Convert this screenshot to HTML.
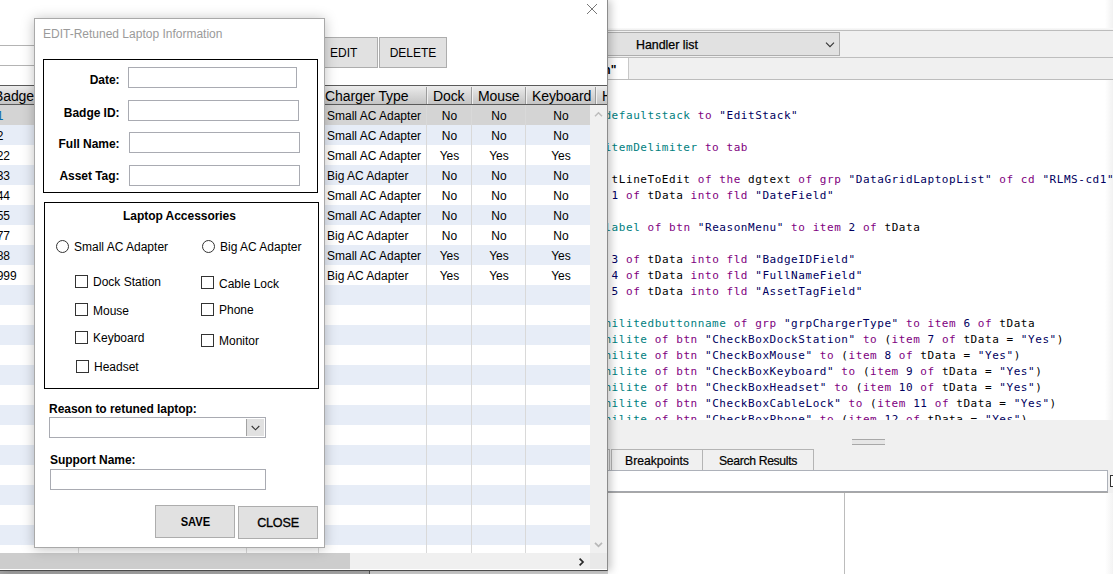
<!DOCTYPE html>
<html><head><meta charset="utf-8"><title>EDIT-Retuned Laptop Information</title>
<style>
*{box-sizing:border-box;margin:0;padding:0}
html,body{width:1113px;height:574px;overflow:hidden;background:#fff}
body{position:relative;font-family:"Liberation Sans",sans-serif;font-size:12px;color:#000}
.abs{position:absolute}
/* ---------- script editor (right) ---------- */
#ed{position:absolute;left:560px;top:0;width:553px;height:574px;background:#fff;overflow:hidden}
#ed .bar1{position:absolute;left:0;top:28px;width:553px;height:30px;background:linear-gradient(#fafafa 0,#f0f0f0 2px,#bcbcbc 2px,#bcbcbc 3px,#f0f0f0 3px);border-bottom:1px solid #bebebe}
#ed .combo{position:absolute;left:0;top:32px;width:280px;height:24px;background:#e1e1e1;border:1px solid #adadad}
#ed .combo span{position:absolute;left:75px;top:5px;font-size:12.4px;-webkit-text-stroke:0.25px #000;white-space:nowrap}
#ed .bar2{position:absolute;left:0;top:58px;width:553px;height:22px;background:#f0f0f0;border-bottom:1px solid #bdbdbd}
#ed .tab0{position:absolute;left:0;top:58px;width:69px;height:21px;background:#fff;border-right:1px solid #c8c8c8}
#ed .tab0 span{position:absolute;left:36px;top:5px;font-weight:bold;font-size:12px;white-space:nowrap}
#code{position:absolute;left:0;top:80px;width:553px;height:340px;overflow:hidden;background:#fff}
#code pre{position:absolute;left:-13px;top:28px;font-family:"DejaVu Sans Mono",monospace;font-size:11px;letter-spacing:0.555px;line-height:16px;color:#000;white-space:pre}
.k{color:#800080}.p{color:#008080}.s{color:#000060}.c{color:#0000a0}
#ed .low{position:absolute;left:0;top:420px;width:553px;height:154px;background:#f0f0f0}
#ed .grip{position:absolute;left:292px;top:439px;width:33px;height:6px;border-top:1px solid #a8a8a8;border-bottom:1px solid #a8a8a8;background:#e6e6e6}
.btab{position:absolute;top:449px;height:21px;padding-top:1px;background:#f0f0f0;border:1px solid #b4b4b4;border-bottom:none;font-size:12.2px;-webkit-text-stroke:0.2px #000;white-space:nowrap;text-align:center;line-height:20px}
#ed .fld{position:absolute;left:0;top:470px;width:548px;height:22px;background:#fff;border:1px solid #adb1b9;border-bottom:1px solid #a4a7ad}
#ed .pane{position:absolute;left:0;top:492px;width:548px;height:82px;background:#fff;border-top:1px solid #a8a8a8}
#ed .rstrip{position:absolute;left:545px;top:493px;width:8px;height:81px;background:linear-gradient(90deg,#fff,#f3f3f3)}
#ed .rs2{position:absolute;left:545px;width:8px;background:linear-gradient(90deg,rgba(0,0,0,0),rgba(0,0,0,.055))}
#ed .vline{position:absolute;left:284px;top:493px;width:1px;height:82px;background:#bcbcbc}
#ed .cbx{position:absolute;left:550px;top:475px;width:12px;height:12px;border:1px solid #333;background:#fff}
/* ---------- main window ---------- */
#mw{position:absolute;left:0;top:0;width:608px;height:571px;background:#fff;border-right:1px solid #8c8c8c;border-bottom:1px solid #4a4a4a;box-shadow:3px 0 8px rgba(0,0,0,.22);overflow:hidden}
#under{position:absolute;left:0;top:570px;width:608px;height:4px;background:linear-gradient(90deg,#a2a2a2 0,#ababab 369px,#555 369px,#555 370px,#d0d0d0 370px)}
.wbtn{position:absolute;background:#e1e1e1;border:1px solid #adadad;font-size:12px;padding-top:1px;text-align:center;white-space:nowrap}
#hdr{position:absolute;left:0;top:85px;width:607px;height:20px;border-top:1px solid #5a5a5a;border-bottom:1px solid #5a5a5a;background:linear-gradient(#ececec,#d9d9d9 45%,#c4c4c4);overflow:hidden;font-size:14px}
#hdr span{position:absolute;top:2px;white-space:nowrap;letter-spacing:-0.1px}
#hdr i{position:absolute;top:1px;height:17px;background:#9c9c9c;border-right:1px solid #f0f0f0;width:2px}
#rows{position:absolute;left:0;top:105px;width:590px;height:448px;background:repeating-linear-gradient(#fff 0,#fff 20px,#e7edf7 20px,#e7edf7 40px);overflow:hidden}
#rows .sel{position:absolute;left:0;top:0;width:590px;height:20px;background:#d4d4d4}
#rows .cl{position:absolute;top:0;width:1px;height:448px;background:#d9d9d9}
#rows span{position:absolute;white-space:nowrap;font-size:12px;line-height:20px;letter-spacing:0;margin-top:1px}
.cc{text-align:center}
#vs{position:absolute;left:590px;top:105px;width:17px;height:448px;background:#f0f0f0}
#hs{position:absolute;left:0;top:553px;width:590px;height:17px;background:#f0f0f0;border-bottom:1px solid #fff}
#hs .th{position:absolute;left:0;top:0;width:350px;height:16px;background:#cdcdcd}
#cor{position:absolute;left:590px;top:553px;width:17px;height:17px;background:#e9e9e9;border-bottom:1px solid #fff}
/* ---------- dialog ---------- */
#dlg{position:absolute;left:34px;top:18px;width:291px;height:530px;background:#fff;border:1px solid #a9a9a9;box-shadow:0 1px 12px rgba(0,0,0,.25)}
#dlg .ttl{position:absolute;left:8px;top:8px;font-size:12px;color:#9a9a9a;white-space:nowrap;letter-spacing:0}
.grp{position:absolute;border:1px solid #000;background:#fff}
.lb{position:absolute;font-weight:bold;font-size:12px;white-space:nowrap;letter-spacing:-0.04px}
.in{position:absolute;height:21px;background:#fff;border:1px solid #a9abb2}
.cb{position:absolute;width:13px;height:13px;border:1px solid #333;background:#fff}
.rb{position:absolute;width:13px;height:13px;border:1px solid #333;border-radius:50%;background:#fff}
.tx{position:absolute;font-size:12px;white-space:nowrap;letter-spacing:0}
.dbtn{position:absolute;background:#e1e1e1;border:1px solid #adadad;text-align:center;white-space:nowrap;font-size:12.6px}
</style></head>
<body>

<!-- script editor -->
<div id="ed">
  <div class="bar1"></div>
  <div class="combo"><span>Handler list</span>
    <svg class="abs" style="left:263px;top:8px" width="12" height="8" viewBox="0 0 12 8"><path d="M2 1.6 L6 5.6 L10 1.6" fill="none" stroke="#333" stroke-width="1.1"/></svg>
  </div>
  <div class="bar2"></div>
  <div class="tab0"><span>on"</span></div>
  <div id="code"><pre>set the <span class="p">defaultstack</span> <span class="k">to</span> <span class="s">"EditStack"</span>

set the <span class="p">itemDelimiter</span> <span class="k">to</span> <span class="k">tab</span>

put line tLineToEdit <span class="k">of</span> <span class="k">the</span> dgtext <span class="k">of</span> <span class="k">grp</span> <span class="s">"DataGridLaptopList"</span> <span class="k">of</span> <span class="k">cd</span> <span class="s">"RLMS-cd1"</span>
put item <span class="s">1</span> <span class="k">of</span> tData <span class="k">into</span> <span class="k">fld</span> <span class="s">"DateField"</span>

set the <span class="p">label</span> <span class="k">of</span> <span class="k">btn</span> <span class="s">"ReasonMenu"</span> <span class="k">to</span> <span class="k">item</span> <span class="s">2</span> <span class="k">of</span> tData

put item <span class="s">3</span> <span class="k">of</span> tData <span class="k">into</span> <span class="k">fld</span> <span class="s">"BadgeIDField"</span>
put item <span class="s">4</span> <span class="k">of</span> tData <span class="k">into</span> <span class="k">fld</span> <span class="s">"FullNameField"</span>
put item <span class="s">5</span> <span class="k">of</span> tData <span class="k">into</span> <span class="k">fld</span> <span class="s">"AssetTagField"</span>

set the <span class="p">hilitedbuttonname</span> <span class="k">of</span> <span class="k">grp</span> <span class="s">"grpChargerType"</span> <span class="k">to</span> <span class="k">item</span> <span class="s">6</span> <span class="k">of</span> tData
set the <span class="p">hilite</span> <span class="k">of</span> <span class="k">btn</span> <span class="s">"CheckBoxDockStation"</span> <span class="k">to</span> (<span class="k">item</span> <span class="s">7</span> <span class="k">of</span> tData = <span class="s">"Yes"</span>)
set the <span class="p">hilite</span> <span class="k">of</span> <span class="k">btn</span> <span class="s">"CheckBoxMouse"</span> <span class="k">to</span> (<span class="k">item</span> <span class="s">8</span> <span class="k">of</span> tData = <span class="s">"Yes"</span>)
set the <span class="p">hilite</span> <span class="k">of</span> <span class="k">btn</span> <span class="s">"CheckBoxKeyboard"</span> <span class="k">to</span> (<span class="k">item</span> <span class="s">9</span> <span class="k">of</span> tData = <span class="s">"Yes"</span>)
set the <span class="p">hilite</span> <span class="k">of</span> <span class="k">btn</span> <span class="s">"CheckBoxHeadset"</span> <span class="k">to</span> (<span class="k">item</span> <span class="s">10</span> <span class="k">of</span> tData = <span class="s">"Yes"</span>)
set the <span class="p">hilite</span> <span class="k">of</span> <span class="k">btn</span> <span class="s">"CheckBoxCableLock"</span> <span class="k">to</span> (<span class="k">item</span> <span class="s">11</span> <span class="k">of</span> tData = <span class="s">"Yes"</span>)
set the <span class="p">hilite</span> <span class="k">of</span> <span class="k">btn</span> <span class="s">"CheckBoxPhone"</span> <span class="k">to</span> (<span class="k">item</span> <span class="s">12</span> <span class="k">of</span> tData = <span class="s">"Yes"</span>)
set the <span class="p">hilite</span> <span class="k">of</span> <span class="k">btn</span> <span class="s">"CheckBoxMonitor"</span> <span class="k">to</span> (<span class="k">item</span> <span class="s">13</span> <span class="k">of</span> tData = <span class="s">"Yes"</span>)</pre></div>
  <div class="low"></div>
  <div class="grip"></div>
  <div class="btab" style="left:0;width:50px">Errors</div>
  <div class="btab" style="left:51px;width:92px;letter-spacing:-0.05px">Breakpoints</div>
  <div class="btab" style="left:142px;width:112px;letter-spacing:-0.33px">Search Results</div>
  <div class="pane"></div><div class="rstrip"></div><div class="rs2" style="top:0;height:28px"></div><div class="rs2" style="top:80px;height:340px"></div>
  <div class="fld"></div>
  <div class="vline"></div>
  <div class="cbx"></div>
</div>

<!-- main window -->
<div id="under"></div>
<div id="mw">
  <svg class="abs" style="left:586px;top:3px" width="12" height="12" viewBox="0 0 12 12"><path d="M1 1 L11 11 M11 1 L1 11" stroke="#777" stroke-width="1" fill="none"/></svg>
  <div class="abs" style="left:-5px;top:45px;width:60px;height:21px;border:1px solid #b4b4b4;background:#fff"></div>
  <div class="wbtn" style="left:300px;top:37px;width:78px;height:31px;line-height:29px;text-align:left;padding-left:29px">EDIT</div>
  <div class="wbtn" style="left:379px;top:37px;width:68px;height:31px;line-height:29px">DELETE</div>
  <div id="hdr">
    <span style="left:-6px">Badge ID</span>
    <span style="left:325px">Charger Type</span><i style="left:426px"></i>
    <span style="left:433px">Dock</span><i style="left:471px"></i>
    <span style="left:478px">Mouse</span><i style="left:525px"></i>
    <span style="left:532px">Keyboard</span><i style="left:595px"></i>
    <span style="left:602px">Headset</span>
  </div>
  <div id="rows">
    <div class="sel"></div>
    <div class="cl" style="left:78px"></div><div class="cl" style="left:246px"></div><div class="cl" style="left:318px"></div>
    <div class="cl" style="left:426px"></div><div class="cl" style="left:471px"></div><div class="cl" style="left:525px"></div>
    <span style="left:-9px;top:0;color:#0a6aa8">11</span>
    <span style="left:-10px;top:20px">22</span>
    <span style="left:-10px;top:40px">222</span>
    <span style="left:-10px;top:60px">333</span>
    <span style="left:-10px;top:80px">444</span>
    <span style="left:-10px;top:100px">555</span>
    <span style="left:-10px;top:120px">777</span>
    <span style="left:-10px;top:140px">888</span>
    <span style="left:-10px;top:160px">9999</span>
    <span style="left:327px;top:0">Small AC Adapter</span><span class="cc" style="left:427px;width:45px;top:0">No</span><span class="cc" style="left:472px;width:54px;top:0">No</span><span class="cc" style="left:526px;width:70px;top:0">No</span>
    <span style="left:327px;top:20px">Small AC Adapter</span><span class="cc" style="left:427px;width:45px;top:20px">No</span><span class="cc" style="left:472px;width:54px;top:20px">No</span><span class="cc" style="left:526px;width:70px;top:20px">No</span>
    <span style="left:327px;top:40px">Small AC Adapter</span><span class="cc" style="left:427px;width:45px;top:40px">Yes</span><span class="cc" style="left:472px;width:54px;top:40px">Yes</span><span class="cc" style="left:526px;width:70px;top:40px">Yes</span>
    <span style="left:327px;top:60px">Big AC Adapter</span><span class="cc" style="left:427px;width:45px;top:60px">No</span><span class="cc" style="left:472px;width:54px;top:60px">No</span><span class="cc" style="left:526px;width:70px;top:60px">No</span>
    <span style="left:327px;top:80px">Small AC Adapter</span><span class="cc" style="left:427px;width:45px;top:80px">No</span><span class="cc" style="left:472px;width:54px;top:80px">No</span><span class="cc" style="left:526px;width:70px;top:80px">No</span>
    <span style="left:327px;top:100px">Small AC Adapter</span><span class="cc" style="left:427px;width:45px;top:100px">No</span><span class="cc" style="left:472px;width:54px;top:100px">No</span><span class="cc" style="left:526px;width:70px;top:100px">No</span>
    <span style="left:327px;top:120px">Big AC Adapter</span><span class="cc" style="left:427px;width:45px;top:120px">No</span><span class="cc" style="left:472px;width:54px;top:120px">No</span><span class="cc" style="left:526px;width:70px;top:120px">No</span>
    <span style="left:327px;top:140px">Small AC Adapter</span><span class="cc" style="left:427px;width:45px;top:140px">Yes</span><span class="cc" style="left:472px;width:54px;top:140px">Yes</span><span class="cc" style="left:526px;width:70px;top:140px">Yes</span>
    <span style="left:327px;top:160px">Big AC Adapter</span><span class="cc" style="left:427px;width:45px;top:160px">Yes</span><span class="cc" style="left:472px;width:54px;top:160px">Yes</span><span class="cc" style="left:526px;width:70px;top:160px">Yes</span>
  </div>
  <div id="vs">
    <svg class="abs" style="left:4px;top:5px" width="9" height="8" viewBox="0 0 9 8"><path d="M1 6.2 L4.5 2.7 L8 6.2" fill="none" stroke="#bdbdbd" stroke-width="1.5"/></svg>
    <svg class="abs" style="left:4px;top:436px" width="9" height="8" viewBox="0 0 9 8"><path d="M1 1.8 L4.5 5.3 L8 1.8" fill="none" stroke="#b8b8b8" stroke-width="1.7"/></svg>
  </div>
  <div id="hs"><div class="th"></div>
    <svg class="abs" style="left:578px;top:4px" width="8" height="10" viewBox="0 0 8 10"><path d="M1.6 1.6 L5 5 L1.6 8.4" fill="none" stroke="#2a2a2a" stroke-width="1.7"/></svg>
  </div>
  <div id="cor"></div>
</div>

<!-- dialog -->
<div id="dlg">
  <div class="ttl">EDIT-Retuned Laptop Information</div>

  <div class="grp" style="left:8px;top:40px;width:275px;height:134px"></div>
  <div class="lb" style="left:0;width:84.5px;text-align:right;top:54px">Date:</div>
  <div class="in" style="left:93px;top:48px;width:169px"></div>
  <div class="lb" style="left:0;width:84.5px;text-align:right;top:87px">Badge ID:</div>
  <div class="in" style="left:93px;top:81px;width:171px"></div>
  <div class="lb" style="left:0;width:84.5px;text-align:right;top:118px">Full Name:</div>
  <div class="in" style="left:94px;top:113px;width:171px"></div>
  <div class="lb" style="left:0;width:84.5px;text-align:right;top:150px">Asset Tag:</div>
  <div class="in" style="left:94px;top:146px;width:171px"></div>

  <div class="grp" style="left:9px;top:183px;width:275px;height:187px"></div>
  <div class="lb" style="left:88px;top:190px">Laptop Accessories</div>
  <div class="rb" style="left:21px;top:221px"></div><div class="tx" style="left:39px;top:221px">Small AC Adapter</div>
  <div class="rb" style="left:167px;top:221px"></div><div class="tx" style="left:185px;top:221px">Big AC Adapter</div>
  <div class="cb" style="left:40px;top:256px"></div><div class="tx" style="left:58px;top:256px">Dock Station</div>
  <div class="cb" style="left:166px;top:257px"></div><div class="tx" style="left:184px;top:258px">Cable Lock</div>
  <div class="cb" style="left:40px;top:284px"></div><div class="tx" style="left:58px;top:285px">Mouse</div>
  <div class="cb" style="left:166px;top:284px"></div><div class="tx" style="left:184px;top:284px">Phone</div>
  <div class="cb" style="left:40px;top:312px"></div><div class="tx" style="left:58px;top:312px">Keyboard</div>
  <div class="cb" style="left:166px;top:315px"></div><div class="tx" style="left:184px;top:315px">Monitor</div>
  <div class="cb" style="left:41px;top:341px"></div><div class="tx" style="left:59px;top:341px">Headset</div>

  <div class="lb" style="left:14px;top:383px">Reason to retuned laptop:</div>
  <div class="in" style="left:14px;top:398px;width:217px"></div>
  <div class="abs" style="left:211px;top:400px;width:18px;height:17px;background:#e1e1e1;border-left:1px solid #a2a2a2"></div>
  <svg class="abs" style="left:214.6px;top:406px" width="11" height="7" viewBox="0 0 11 7"><path d="M1.7 1 L5.5 4.8 L9.3 1" fill="none" stroke="#333" stroke-width="1.1"/></svg>
  <div class="lb" style="left:15px;top:434px">Support Name:</div>
  <div class="in" style="left:15px;top:450px;width:216px"></div>

  <div class="dbtn" style="left:120px;top:486px;width:80px;height:33px;line-height:33px;font-weight:bold;font-size:12.4px;padding-left:1px"><span style="display:inline-block;transform:scaleX(.9)">SAVE</span></div>
  <div class="dbtn" style="left:203px;top:487px;width:80px;height:33px;line-height:33px;-webkit-text-stroke:0.3px #000;letter-spacing:-0.2px">CLOSE</div>
</div>

</body></html>
